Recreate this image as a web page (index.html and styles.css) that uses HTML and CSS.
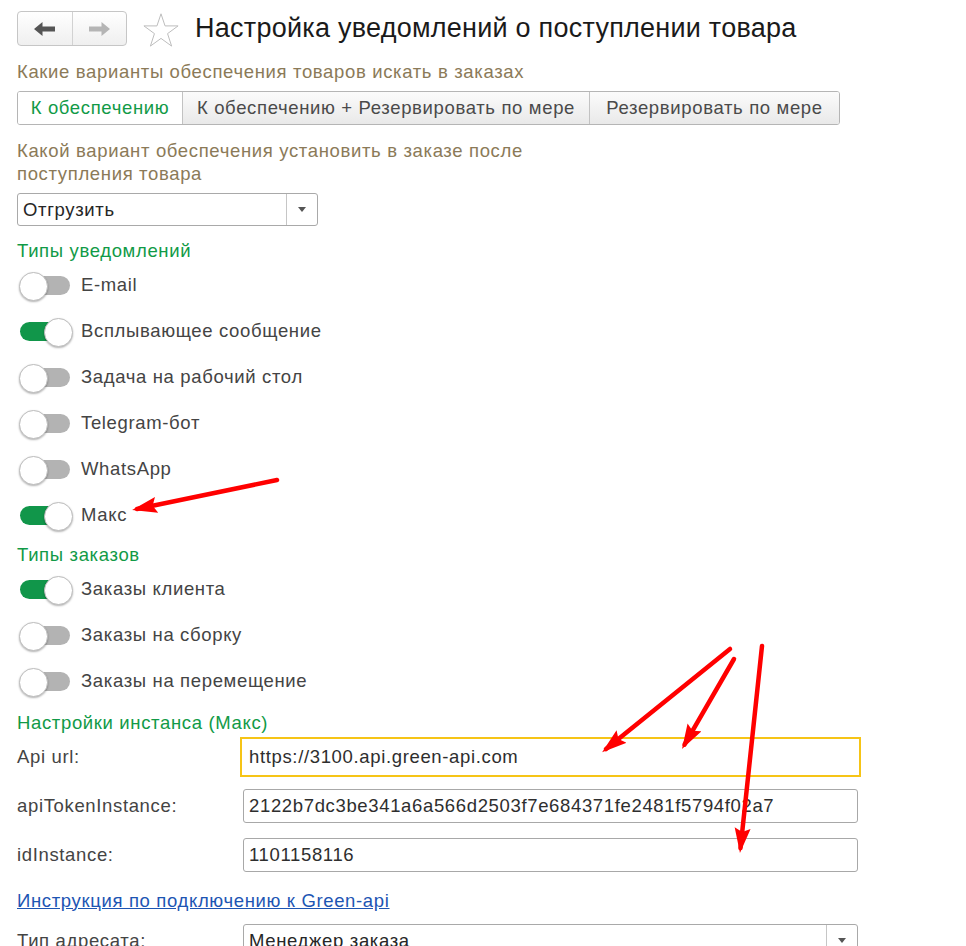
FILE: index.html
```html
<!DOCTYPE html>
<html>
	<head>
		<meta charset="UTF-8">
		<title>Настройка уведомлений о поступлении товара</title>
		<link rel="stylesheet" href="styles.css">
	</head>
	<body>
		<div class="form">
			<div class="header">
				<div class="nav">
					<span class="nav-btn">
						<svg width="22" height="14" viewBox="0 0 22 14"><path d="M0 7 L8.5 0 L8.5 4.6 L21 4.6 L21 9.4 L8.5 9.4 L8.5 14 Z" fill="#555"/></svg>
					</span>
					<span class="nav-btn">
						<svg width="22" height="14" viewBox="0 0 22 14"><path d="M22 7 L13.5 0 L13.5 4.6 L1 4.6 L1 9.4 L13.5 9.4 L13.5 14 Z" fill="#b5b5b5"/></svg>
					</span>
				</div>
				<svg class="star" width="36" height="34" viewBox="0 0 36 34"><path d="M18 0.8 L22.06 12.92 L35.1 12.9 L24.56 20.63 L28.6 33.1 L18 25.4 L7.4 33.1 L11.44 20.63 L0.9 12.9 L13.94 12.92 Z" fill="none" stroke="#bdbdbd" stroke-width="1"/></svg>
				<h1 class="title">Настройка уведомлений о поступлении товара</h1>
			</div>

			<div class="label label-first">Какие варианты обеспечения товаров искать в заказах</div>
			<div class="tabs">
				<span class="tab tab-active tab-1">К обеспечению</span>
				<span class="tab tab-2">К обеспечению + Резервировать по мере</span>
				<span class="tab tab-3">Резервировать по мере</span>
			</div>

			<div class="label label-second">Какой вариант обеспечения установить в заказе после<br>поступления товара</div>
			<div class="select select-short">
				<span class="select-value">Отгрузить</span>
				<span class="select-btn"></span>
			</div>

			<div class="group-title group-first">Типы уведомлений</div>
			<ul class="toggles">
				<li class="toggle-row"><span class="switch"></span>E-mail</li>
				<li class="toggle-row"><span class="switch on"></span>Всплывающее сообщение</li>
				<li class="toggle-row"><span class="switch"></span>Задача на рабочий стол</li>
				<li class="toggle-row"><span class="switch"></span>Telegram-бот</li>
				<li class="toggle-row"><span class="switch"></span>WhatsApp</li>
				<li class="toggle-row"><span class="switch on"></span>Макс</li>
			</ul>

			<div class="group-title group-next">Типы заказов</div>
			<ul class="toggles">
				<li class="toggle-row"><span class="switch on"></span>Заказы клиента</li>
				<li class="toggle-row"><span class="switch"></span>Заказы на сборку</li>
				<li class="toggle-row"><span class="switch"></span>Заказы на перемещение</li>
			</ul>

			<div class="group-title group-last">Настройки инстанса (Макс)</div>
			<div class="fields">
				<span class="field-label">Api url:</span>
				<div class="input focused">https://3100.api.green-api.com</div>
				<span class="field-label">apiTokenInstance:</span>
				<div class="input">2122b7dc3be341a6a566d2503f7e684371fe2481f5794f02a7</div>
				<span class="field-label">idInstance:</span>
				<div class="input">1101158116</div>
			</div>

			<a class="link" href="javascript:;">Инструкция по подключению к Green-api</a>

			<div class="fields fields-bottom">
				<span class="field-label">Тип адресата:</span>
				<div class="select select-wide">
					<span class="select-value">Менеджер заказа</span>
					<span class="select-btn"></span>
				</div>
			</div>
		</div>

		<svg class="arrows" width="966" height="946" viewBox="0 0 966 946">
			<defs>
				<marker id="head" markerUnits="userSpaceOnUse" markerWidth="26" markerHeight="18" refX="20" refY="8" orient="auto">
					<path d="M0 0 L25 8 L0 16 L4 8 Z" fill="#ff0000"/>
				</marker>
			</defs>
			<g stroke="#ff0000" stroke-width="4.5" stroke-linecap="round" fill="none" marker-end="url(#head)">
				<line x1="277" y1="480" x2="137" y2="509"/>
				<line x1="730" y1="649" x2="606" y2="749"/>
				<line x1="734" y1="659" x2="684.5" y2="744.7"/>
				<line x1="762" y1="646" x2="740.5" y2="848"/>
			</g>
		</svg>
	</body>
</html>
```

FILE: styles.css
```css
*{margin: 0;padding: 0;box-sizing: border-box;}
li{list-style: none;}
body{font-family: "Liberation Sans", Arial, sans-serif; font-size: 18.5px; letter-spacing: 0.65px; color: #444; background: #fff; position: relative; overflow: hidden; height: 946px;}

.form{padding: 11px 0 0 17px;}

/* шапка */
.header{display: flex; align-items: center; height: 35px;}
.nav{display: flex; width: 110px; height: 35px; border: 1px solid #c6c6c6; border-radius: 4px; background: linear-gradient(#ffffff, #efefef);}
.nav-btn{flex: 1; display: flex; align-items: center; justify-content: center;}
.nav-btn + .nav-btn{border-left: 1px solid #d2d2d2;}
.star{margin-left: 16px; margin-top: 2px;}
.title{margin-left: 16px; font-size: 27px; letter-spacing: 0.25px; font-weight: normal; color: #1a1a1a; line-height: 35px; white-space: nowrap;}

.label{color: #8b7a58; line-height: 23px;}
.label-first{margin-top: 13.5px;}
.label-second{margin-top: 13.5px;}

/* переключатель вариантов */
.tabs{display: inline-flex; margin-top: 8.5px; height: 34px; border: 1px solid #b5b5b5; border-radius: 3px; overflow: hidden;}
.tab{display: flex; align-items: center; justify-content: center; white-space: nowrap; background: linear-gradient(#fbfbfb, #e9e9e9); color: #4a4a4a;}
.tab + .tab{border-left: 1px solid #c2c2c2;}
.tab-1{width: 164px;}
.tab-2{width: 407px;}
.tab-3{width: 250px;}
.tab-active{background: #fff; color: #119a47;}

.select{display: flex; height: 33px; border: 1px solid #a9a9a9; border-radius: 3px; background: #fff;}
.select-short{width: 301px; margin-top: 8.5px;}
.select-wide{width: 615px;}
.select-value{flex: 1; display: flex; align-items: center; padding-left: 5px; color: #262626;}
.select-btn{width: 31px; border-left: 1px solid #c6c6c6; display: flex; align-items: center; justify-content: center;}
.select-btn::after{content: ""; border-left: 4.5px solid transparent; border-right: 4.5px solid transparent; border-top: 5px solid #555;}

/* группы */
.group-title{color: #119a47; line-height: 22px;}
.group-first{margin-top: 14px;}
.group-next{margin-top: 6px;}
.group-last{margin-top: 8px;}

.toggle-row{display: flex; align-items: center; height: 46px; color: #444;}
.switch{position: relative; width: 52px; height: 27px; margin: 0 10px 0 2px;}
.switch::before{content: ""; position: absolute; left: 1px; top: 4px; width: 50px; height: 19px; border-radius: 10px; background: #b3b3b3;}
.switch::after{content: ""; position: absolute; left: 0; top: 0; width: 27px; height: 27px; border-radius: 50%; background: #fff; border: 1px solid #bdbdbd; box-shadow: 0 1px 2px rgba(0,0,0,0.3);}
.switch.on::before{background: #11964a;}
.switch.on::after{left: 25px;}

/* поля */
.fields{display: grid; grid-template-columns: 226px 615px; row-gap: 15px; align-items: center; margin-top: 5.5px;}
.field-label{color: #444;}
.input{height: 34px; border: 1px solid #a8a8a8; border-radius: 3px; padding-left: 5px; display: flex; align-items: center; color: #2e2e2e; white-space: nowrap;}
.input.focused{border-color: #fff; outline: 2px solid #f6c416; outline-offset: 1px; border-radius: 0;}

.link{display: block; width: max-content; margin-top: 17px; line-height: 23px; color: #1d55b3; text-decoration: underline;}
.fields-bottom{margin-top: 12.5px;}

.arrows{position: absolute; left: 0; top: 0; pointer-events: none;}
```
